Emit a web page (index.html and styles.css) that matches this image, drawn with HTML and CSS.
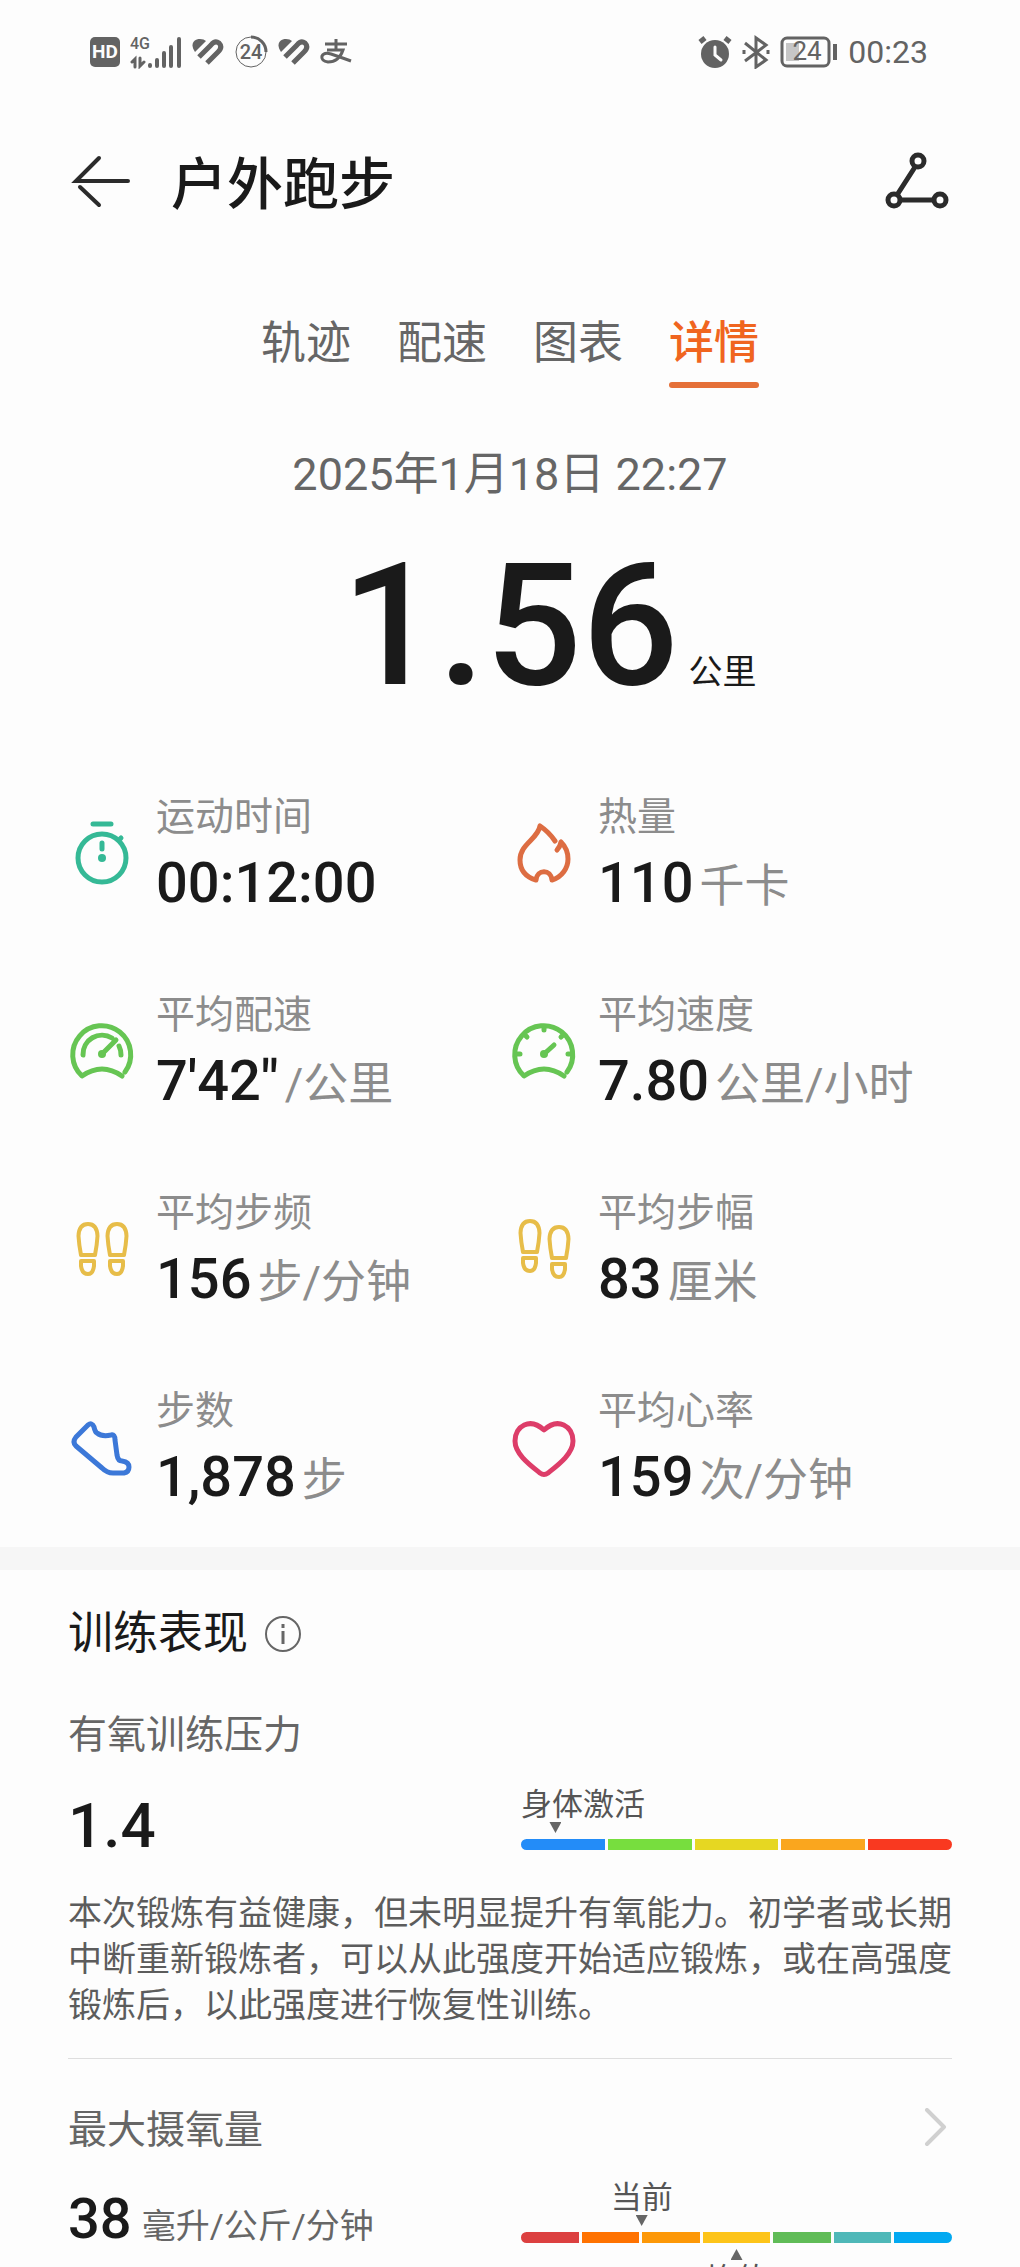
FILE: index.html
```html
<!DOCTYPE html>
<html lang="zh-CN">
<head>
<meta charset="utf-8">
<meta name="viewport" content="width=device-width, initial-scale=1">
<title>户外跑步</title>
<link rel="stylesheet" href="styles.css">
</head>
<body>
<svg class="defs" aria-hidden="true">
  <symbol id="health" viewBox="0 0 32 32">
    <path fill="currentColor" d="M3 16C-2 9 1 3 8 3Q12 3 14 5Z"/>
    <path fill="none" stroke="currentColor" stroke-width="5" d="M7 21 19 9Q23 4 27 7 31 11 26 16L15 27"/>
  </symbol>
  <symbol id="sole" viewBox="0 0 24 56">
    <path d="M5 34Q3 24 2.500 15 3 3 12 3 21 3 21.500 15 21 24 19 34ZM5 40H18V45Q17 53 12 53 6 53 5 45Z"/>
  </symbol>
</svg>

<div class="status">
  <div class="status-group">
    <svg width="30" height="32" viewBox="0 0 30 32"><rect x="0" y="1" width="30" height="30" rx="5" fill="currentColor"/><text x="15" y="22" class="hd">HD</text></svg>
    <svg width="52" height="34" viewBox="0 0 52 34"><text x="0" y="14" class="net">4G</text><g fill="none" stroke="currentColor" stroke-width="4" stroke-linecap="round"><path d="M20 30v1M27 25v6M34 18v13M41 12v19M49 4v27"/><path stroke-width="3" d="M5 32V24L2 27M10 23v8l4-4"/></g></svg>
    <svg width="32" height="32"><use href="#health"/></svg>
    <svg width="34" height="34" viewBox="0 0 34 34"><circle cx="17" cy="17" r="15" fill="none" stroke="currentColor" stroke-width="1"/><path d="M17 2A15 15 0 0 1 32 17" fill="none" stroke="currentColor" stroke-width="3"/><text x="17" y="24" class="ring">24</text></svg>
    <svg width="32" height="32"><use href="#health"/></svg>
    <svg width="32" height="32" viewBox="0 0 32 32" fill="none" stroke="currentColor" stroke-width="3"><path d="M5 8H27M16 3V14M7 14H23Q19 26 8 26 1 25 2 20 4 16 11 18 20 21 31 25"/></svg>
  </div>
  <div class="status-group">
    <svg width="34" height="34" viewBox="0 0 34 34"><circle cx="17" cy="19" r="14" fill="currentColor"/><path d="M17 12v8l6 5" fill="none" stroke="#fdfdfd" stroke-width="3" stroke-linecap="round"/><path d="M2 7 7 3M27 3l5 4" stroke="currentColor" stroke-width="5"/></svg>
    <svg width="28" height="34" viewBox="0 0 28 34" fill="none" stroke="currentColor" stroke-width="3"><path d="M3 8 24 25 14 32V3L24 10 3 26"/><path d="M2 15v4M26 15v4"/></svg>
    <svg width="58" height="32" viewBox="0 0 58 32"><rect x="6" y="7" width="13" height="18" fill="#c6c6c6"/><rect x="2" y="2" width="47" height="28" rx="5" fill="none" stroke="currentColor" stroke-width="3"/><path d="M55 8v16" stroke="currentColor" stroke-width="4"/><text x="27" y="24" class="batt">24</text></svg>
    <time>00:23</time>
  </div>
</div>

<header class="header">
  <button class="icon-button" aria-label="返回"><svg width="62" height="56" viewBox="0 0 62 56" fill="none" stroke="currentColor" stroke-width="4" stroke-linecap="round"><path d="M60 27H8L31 4M12 33 31 51"/></svg></button>
  <h1>户外跑步</h1>
  <button class="icon-button" aria-label="轨迹分享"><svg width="68" height="60" viewBox="0 0 68 60" fill="none" stroke="currentColor" stroke-width="5"><circle cx="34" cy="9" r="6"/><circle cx="10" cy="48" r="6"/><circle cx="56" cy="48" r="6"/><path d="M31 15 13 43M16 48H50"/></svg></button>
</header>

<nav class="tabs">
  <a href="#track">轨迹</a>
  <a href="#pace">配速</a>
  <a href="#charts">图表</a>
  <a href="#details" class="active" aria-current="page">详情</a>
</nav>

<main id="details">
  <section class="summary">
    <p class="date">2025年1月18日 22:27</p>
    <p class="distance"><strong>1.56</strong><span>公里</span></p>
  </section>

  <section class="stats">
    <div class="stat">
      <svg class="teal" viewBox="0 0 68 68"><circle cx="34" cy="38" r="24"/><path d="M25 4H43M34 23v6M51 20l2-2"/><circle class="dot" cx="34" cy="38" r="4"/></svg>
      <div><p class="label">运动时间</p><p class="value">00:12:00</p></div>
    </div>
    <div class="stat">
      <svg class="orange" viewBox="0 0 68 68"><path d="M45 21Q39 12 30 6C28 19 10 24 10 40 10 50 16 57 26 60 27 49 41 49 42 60 52 57 58 48 58 39 58 32 55 26 51 22Q50 27 47 30"/></svg>
      <div><p class="label">热量</p><p class="value">110<span>千卡</span></p></div>
    </div>
    <div class="stat">
      <svg class="green" viewBox="0 0 68 68"><path d="M57 54A29 29 0 1 0 14 58Q34 44 54 58M15 37A19 19 0 0 1 44 20M51 28Q53 32 53 37M34 36 48 22"/><circle class="dot" cx="34" cy="36" r="4"/></svg>
      <div><p class="label">平均配速</p><p class="value">7'42"<span>/公里</span></p></div>
    </div>
    <div class="stat">
      <svg class="green" viewBox="0 0 68 68"><path d="M57 54A29 29 0 1 0 14 58Q34 44 54 58M34 36 44 27M34 8v4M6 36h4M58 36h4M15 17l2 2M53 17l-2 2"/><circle class="dot" cx="34" cy="36" r="4"/></svg>
      <div><p class="label">平均速度</p><p class="value">7.80<span>公里/小时</span></p></div>
    </div>
    <div class="stat">
      <svg class="yellow" viewBox="0 0 68 68"><use href="#sole" x="8" y="5" width="24" height="56"/><use href="#sole" x="37" y="5" width="24" height="56"/></svg>
      <div><p class="label">平均步频</p><p class="value">156<span>步/分钟</span></p></div>
    </div>
    <div class="stat">
      <svg class="yellow" viewBox="0 0 68 68"><use href="#sole" x="8" y="2" width="24" height="56"/><use href="#sole" x="37" y="8" width="24" height="56"/></svg>
      <div><p class="label">平均步幅</p><p class="value">83<span>厘米</span></p></div>
    </div>
    <div class="stat">
      <svg class="blue" viewBox="0 0 68 68"><path d="M20 11 8 23Q4 28 8 32L34 54Q39 59 45 59H56Q61 58 61 53 61 48 54 47 50 47 49 41L47 26Q47 20 43 21 34 23 29 19 27 18 26 13 24 8 20 11Z"/></svg>
      <div><p class="label">步数</p><p class="value">1,878<span>步</span></p></div>
    </div>
    <div class="stat">
      <svg class="pink" viewBox="0 0 68 68"><path d="M34 16C20 3 5 12 5 27 5 40 20 51 30 59Q34 62 38 59C48 51 63 40 63 27 63 12 48 3 34 16Z"/></svg>
      <div><p class="label">平均心率</p><p class="value">159<span>次/分钟</span></p></div>
    </div>
  </section>

  <section class="training">
    <div class="section-title">
      <h2>训练表现</h2>
      <button class="icon-button info" aria-label="说明"><svg width="36" height="36" viewBox="0 0 36 36" fill="none" stroke="currentColor" stroke-width="2"><circle cx="18" cy="18" r="17"/><path stroke-width="3" d="M18 15V28M18 8v4"/></svg></button>
    </div>

    <article class="metric">
      <h3>有氧训练压力</h3>
      <div class="reading">
        <p class="score">1.4</p>
        <div class="meter">
          <span class="meter-label start">身体激活</span>
          <i class="marker" style="left: 8%"></i>
          <div class="bar"><i class="azure"></i><i class="lime"></i><i class="gold"></i><i class="amber"></i><i class="red"></i></div>
        </div>
      </div>
      <p class="advice">本次锻炼有益健康，但未明显提升有氧能力。初学者或长期中断重新锻炼者，可以从此强度开始适应锻炼，或在高强度锻炼后，以此强度进行恢复性训练。</p>
    </article>

    <article class="metric vo2">
      <a class="metric-link" href="#vo2max"><h3>最大摄氧量</h3><svg width="32" height="44" viewBox="0 0 32 44" fill="none" stroke="#d0d0d0" stroke-width="4" stroke-linecap="round" stroke-linejoin="round"><path d="M7 2 24 19 7 36"/></svg></a>
      <div class="reading">
        <p class="value">38<small>毫升/公斤/分钟</small></p>
        <div class="meter">
          <span class="meter-label" style="left: 28%">当前</span>
          <i class="marker" style="left: 28%"></i>
          <div class="bar"><i class="crimson"></i><i class="orange-deep"></i><i class="orange-mid"></i><i class="sun wide"></i><i class="leaf"></i><i class="aqua"></i><i class="sky"></i></div>
          <i class="marker below" style="left: 50%"></i>
          <span class="meter-label below" style="left: 50%">均值</span>
        </div>
      </div>
    </article>
  </section>
</main>
</body>
</html>
```
FILE: styles.css
```css
* {
  box-sizing: border-box;
  margin: 0;
  padding: 0;
}

html {
  overflow: hidden auto;
  scrollbar-width: none;
}

body {
  background: #fdfdfd;
  color: #1a1a1a;
  font-family: Roboto, "Noto Sans CJK SC", sans-serif;
}

svg {
  display: block;
  flex: none;
}

a {
  color: inherit;
  text-decoration: none;
}

.defs {
  position: absolute;
  width: 0;
  height: 0;
}

.icon-button {
  display: block;
  border: 0;
  background: none;
  color: #2b2b2b;
}

/* Status bar */
.status {
  display: flex;
  justify-content: space-between;
  padding: 32px 92px 32px 90px;
  color: #636363;
  font-size: 32px;
  line-height: 40px;
}

.status-group {
  display: flex;
  align-items: center;
  gap: 10px;
}

.status text {
  fill: currentColor;
  font-family: Roboto, sans-serif;
}

.status .hd {
  fill: #fdfdfd;
  font-size: 19px;
  font-weight: 700;
  text-anchor: middle;
}

.status .net {
  font-size: 16px;
  font-weight: 500;
}

.status .ring {
  font-size: 20px;
  font-weight: 500;
  text-anchor: middle;
}

.status .batt {
  font-size: 26px;
  text-anchor: middle;
}

/* Header and tabs */
.header {
  display: flex;
  align-items: center;
  padding: 38px 68px;
}

.header h1 {
  flex: 1;
  padding: 6px 40px 0 41px;
  font-size: 56px;
  font-weight: 500;
  line-height: 74px;
}

.tabs {
  display: flex;
  justify-content: center;
  gap: 46px;
  padding-top: 54px;
  color: #666;
  font-size: 45px;
  line-height: 60px;
}

.tabs a::after {
  content: "";
  display: block;
  height: 6px;
  margin-top: 8px;
  border-radius: 3px;
}

.tabs .active {
  color: #f0651f;
  font-weight: 500;
}

.tabs .active::after {
  background: #e57038;
}

/* Distance */
.summary {
  padding: 57px 68px 0;
  text-align: center;
}

.date {
  color: #666;
  font-size: 45px;
  line-height: 60px;
}

.distance {
  display: grid;
  grid-template-columns: 1fr auto 1fr;
  align-items: baseline;
  column-gap: 10px;
  margin-top: 33px;
}

.distance strong {
  grid-column: 2;
  font-size: 170px;
  font-weight: 500;
  line-height: 176px;
}

.distance span {
  font-size: 34px;
  line-height: 40px;
  text-align: left;
}

/* Statistics */
.stats {
  display: grid;
  grid-template-columns: 1fr 1fr;
  row-gap: 66px;
  padding: 74px 68px 33px;
}

.stat {
  display: flex;
  align-items: center;
  gap: 20px;
}

.stat svg {
  width: 68px;
  height: 68px;
  fill: none;
  stroke: currentColor;
  stroke-width: 5;
  stroke-linecap: round;
  stroke-linejoin: round;
}

.stat .yellow {
  stroke-width: 4;
}

.stat .dot {
  fill: currentColor;
  stroke: none;
}

.teal { color: #35b996; }
.orange { color: #dd6d42; }
.green { color: #66c553; }
.yellow { color: #e7bd49; }
.blue { color: #3c78d8; }
.pink { color: #dd3d69; }

.label {
  color: #8c8c8c;
  font-size: 39px;
  line-height: 58px;
}

.value {
  font-size: 56px;
  font-weight: 500;
  line-height: 74px;
  white-space: nowrap;
}

.value span {
  margin-left: 6px;
  color: #8c8c8c;
  font-size: 45px;
  font-weight: 400;
  line-height: 1;
}

.value small {
  margin-left: 10px;
  color: #666;
  font-size: 34px;
  font-weight: 400;
  line-height: 1;
}

/* Training */
.training {
  padding: 34px 68px 40px;
  border-top: 23px solid #f6f6f6;
}

.section-title {
  display: flex;
  align-items: center;
  gap: 17px;
}

.section-title h2 {
  font-size: 45px;
  font-weight: 400;
  line-height: 60px;
}

.info {
  color: #666;
}

.metric {
  padding-top: 42px;
}

.metric h3 {
  color: #666;
  font-size: 39px;
  font-weight: 400;
  line-height: 58px;
}

.reading {
  display: grid;
  grid-template-columns: 1fr 1fr;
  gap: 22px;
  margin-top: 25px;
}

.score {
  font-size: 62px;
  font-weight: 500;
  line-height: 74px;
}

.meter {
  position: relative;
  padding: 50px 0 13px;
}

.bar {
  display: flex;
  gap: 3px;
  height: 11px;
  border-radius: 6px;
  overflow: hidden;
}

.bar i {
  flex: 58;
}

.bar .wide {
  flex: 67;
}

.meter-label {
  position: absolute;
  top: -2px;
  color: #555;
  font-size: 31px;
  line-height: 36px;
  white-space: nowrap;
  transform: translateX(-50%);
}

.meter-label.start {
  left: 0;
  transform: none;
}

.meter-label.below {
  top: 80px;
}

.marker {
  position: absolute;
  top: 33px;
  width: 12px;
  height: 11px;
  background: #666;
  clip-path: polygon(0 0, 100% 0, 50% 100%);
  transform: translateX(-50%);
}

.marker.below {
  top: 67px;
  clip-path: polygon(50% 0, 100% 100%, 0 100%);
}

.azure { background: #238cf8; }
.lime { background: #77de3e; }
.gold { background: #e6d722; }
.amber { background: #faa61e; }
.red { background: #f93920; }
.crimson { background: #dc4040; }
.orange-deep { background: #ff7200; }
.orange-mid { background: #fd9807; }
.sun { background: #fdc419; }
.leaf { background: #60bc57; }
.aqua { background: #4fb8b8; }
.sky { background: #02a9f1; }

.advice {
  margin-top: 27px;
  color: #5c5c5c;
  font-size: 34px;
  line-height: 46px;
}

.vo2 {
  margin-top: 30px;
  border-top: 1px solid #dedede;
}

.metric-link {
  display: flex;
  align-items: center;
  justify-content: space-between;
}

.vo2 .reading {
  margin-top: 23px;
}
```
